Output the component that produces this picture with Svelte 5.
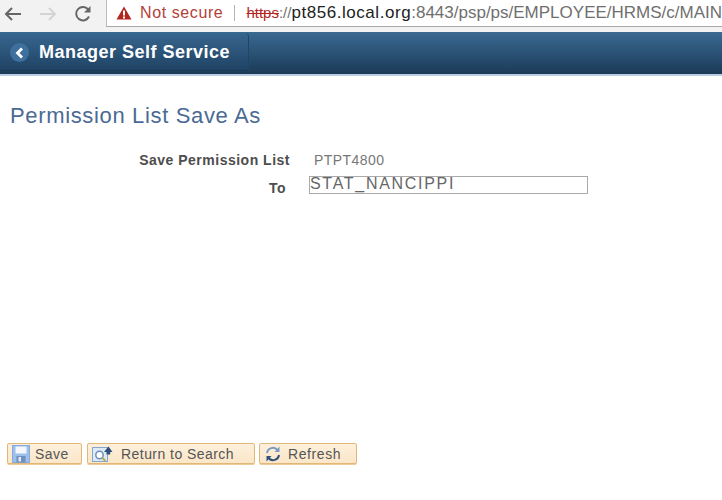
<script>
  const buttons = [
    { label: 'Save', icon: 'save', width: 75, cls: 'b-save' },
    { label: 'Return to Search', icon: 'search', width: 168, cls: 'b-return' },
    { label: 'Refresh', icon: 'refresh', width: 98, cls: 'b-refresh' }
  ];
</script>

<div class="page">
  <div class="chrome">
    <div class="nav">
      <svg width="20" height="20" viewBox="0 0 20 20" class="arrow"><path d="M18 10H3M9 4l-6 6 6 6" fill="none" stroke="#666" stroke-width="2"/></svg>
      <svg width="20" height="20" viewBox="0 0 20 20" class="arrow fwd"><path d="M2 10h15M11 4l6 6-6 6" fill="none" stroke="#d4d4d4" stroke-width="2"/></svg>
      <svg width="20" height="20" viewBox="0 0 20 20" class="arrow reload"><path d="M16 12.500A6.700 6.700 0 1 1 15.500 6" fill="none" stroke="#666" stroke-width="2"/><path d="M17.500 2v6.500H11z" fill="#666"/></svg>
    </div>
    <div class="omnibox">
      <svg width="16" height="14" viewBox="0 0 16 14" class="warn"><path d="M8 0.500l7.500 13H.5z" fill="#b3261e"/><rect x="7" y="4.500" width="2" height="5" fill="#fff"/><rect x="7" y="10.500" width="2" height="2" fill="#fff"/></svg>
      <span class="insecure">Not secure</span>
      <span class="sep"></span>
      <span class="url"><span class="https">https</span><span class="slashes">://</span><span class="host">pt856.local.org</span><span class="path">:8443/psp/ps/EMPLOYEE/HRMS/c/MAIN</span></span>
    </div>
  </div>

  <header class="banner">
    <div class="home">
      <span class="back"><svg width="12" height="12" viewBox="0 0 12 12"><path d="M8 1.500L3.500 6 8 10.500" fill="none" stroke="#fff" stroke-width="2.800"/></svg></span>
      <span class="title">Manager Self Service</span>
    </div>
  </header>

  <main class="content">
    <h1>Permission List Save As</h1>
    <div class="form">
      <div class="row first">
        <span class="label">Save Permission List</span>
        <span class="value">PTPT4800</span>
      </div>
      <div class="row second">
        <span class="label to">To</span>
        <input type="text" value="STAT_NANCIPPI" />
      </div>
    </div>
  </main>

  <footer class="actions">
    {#each buttons as b}
      <button class={b.cls} style="width: {b.width}px">
        {#if b.icon === 'save'}
          <svg width="18" height="18" viewBox="0 0 18 18"><rect x="0.500" y="0.500" width="17" height="17" fill="#9dbfec" stroke="#86aadb"/><rect x="3.500" y="1.500" width="11" height="7" fill="#f4f7fc"/><rect x="4.500" y="11" width="9" height="6.500" fill="#6f8fc0"/><rect x="6.500" y="12" width="2.500" height="4.500" fill="#e6edf7"/></svg>
        {:else if b.icon === 'search'}
          <svg width="21" height="18" viewBox="0 0 21 18"><rect x="0.500" y="2.500" width="15" height="14" fill="#dfeaf7" stroke="#86a7cf"/><circle cx="7.500" cy="10" r="3.700" fill="#fff" stroke="#6c8fb8" stroke-width="1.500"/><path d="M10 12.500l3.500 3.500" stroke="#b3aa5c" stroke-width="2"/><path d="M12 7l4.500-5.500L20.500 7h-2.300v2.500h-3.700V7z" fill="#2f4f78"/></svg>
        {:else}
          <svg width="18" height="18" viewBox="0 0 18 18"><path d="M3 8a6 6 0 0 1 10.500-3" fill="none" stroke="#7a9abf" stroke-width="2"/><path d="M15.500 1.500V7h-5z" fill="#7a9abf"/><path d="M15 10a6 6 0 0 1-10.500 3" fill="none" stroke="#2c4f7c" stroke-width="2"/><path d="M2.500 16.500V11h5z" fill="#2c4f7c"/></svg>
        {/if}
        <span>{b.label}</span>
      </button>
    {/each}
  </footer>
</div>

<style>
  :global(body) { margin: 0; background: #fff; }
  .page {
    width: 722px; height: 500px; overflow: hidden; display: flex; flex-direction: column;
    font-family: "Liberation Sans", Arial, sans-serif; background: #fff;
  }
  .chrome { height: 32px; display: flex; background: #f2f2f2; flex: none; }
  .nav { width: 106px; display: flex; flex: none; padding: 4px 0 0 3px; box-sizing: border-box; }
  .arrow { flex: none; }
  .fwd { margin-left: 15px; }
  .reload { margin-left: 15px; }
  .omnibox {
    flex: 1; min-width: 0; height: 26px; background: #fff; border-left: 1px solid #bdbdbd; border-bottom: 1px solid #a9a9a9;
    display: flex; align-items: center; padding-left: 9px; white-space: nowrap; overflow: hidden; font-size: 16px;
  }
  .warn { flex: none; }
  .insecure { color: #b3403a; margin-left: 8px; font-size: 16px; letter-spacing: 0.6px; }
  .sep { width: 1px; height: 16px; background: #b5b5b5; margin: 0 11px; flex: none; }
  .https { color: #b3261e; text-decoration: line-through; font-size: 15px; }
  .slashes { color: #6f6f6f; font-size: 15px; }
  .host { color: #222; font-size: 17px; letter-spacing: 0.55px; }
  .path { color: #6f6f6f; font-size: 17px; }
  .banner {
    height: 42px; flex: none; background: linear-gradient(#3a6a92, #1b3a57);
    border-bottom: 2px solid #b9cde4;
  }
  .home {
    width: 249px; height: 38px; box-sizing: border-box; border-right: 1px solid #1f4667; border-radius: 0 4px 0 0;
    border-bottom: 1px solid #1b3a57; display: flex; align-items: center; padding-left: 10px;
    background: linear-gradient(#38668f, #1f4364); margin-top: 1px;
  }
  .back {
    width: 19px; height: 19px; border-radius: 50%; background: #3f6f9c; display: flex; align-items: center; justify-content: center; flex: none;
    position: relative; top: 1px;
  }
  .title { color: #fff; font-weight: 700; font-size: 18px; margin-left: 10px; letter-spacing: 0.5px; position: relative; top: 1px; }
  .content { flex: 1; min-height: 0; padding: 27px 0 0 10px; }
  h1 { margin: 0; font-size: 22px; font-weight: 400; color: #4a6a94; line-height: 26px; letter-spacing: 0.65px; }
  .form { margin-top: 21px; font-size: 14px; }
  .row { display: flex; align-items: center; }
  .first { height: 19px; }
  .second { height: 23px; margin-top: 5px; }
  .label { width: 280px; text-align: right; font-weight: 700; color: #4d4d4d; letter-spacing: 0.5px; flex: none; }
  .to { width: 276px; position: relative; top: 2px; }
  .value { margin-left: 24px; color: #777; font-size: 14px; letter-spacing: 0.45px; }
  input {
    margin: -1px 0 0 23px; width: 279px; height: 18px; box-sizing: border-box; border: 1px solid #aaa; padding: 0 0 2px; font: 16px "Liberation Sans", Arial, sans-serif; color: #666; letter-spacing: 1.700px;
  }
  .actions { flex: none; display: flex; gap: 4px; padding: 0 0 36px 7px; }
  button {
    height: 21px; box-sizing: border-box; padding: 0 0 0 4px; display: flex; align-items: center; gap: 6px;
    background: linear-gradient(#fdf0dc, #fbe6c8); border: 1px solid #e2b878; border-radius: 2px; box-shadow: 0 1px 0 #eecb97;
    font: 14px "Liberation Sans", Arial, sans-serif; color: #555; letter-spacing: 0.45px; white-space: nowrap;
  }
  .b-save { gap: 5px; }
  .b-return { margin-left: 1px; gap: 8px; }
  .b-refresh { gap: 6px; letter-spacing: 0.6px; }
  button svg { flex: none; }
</style>
